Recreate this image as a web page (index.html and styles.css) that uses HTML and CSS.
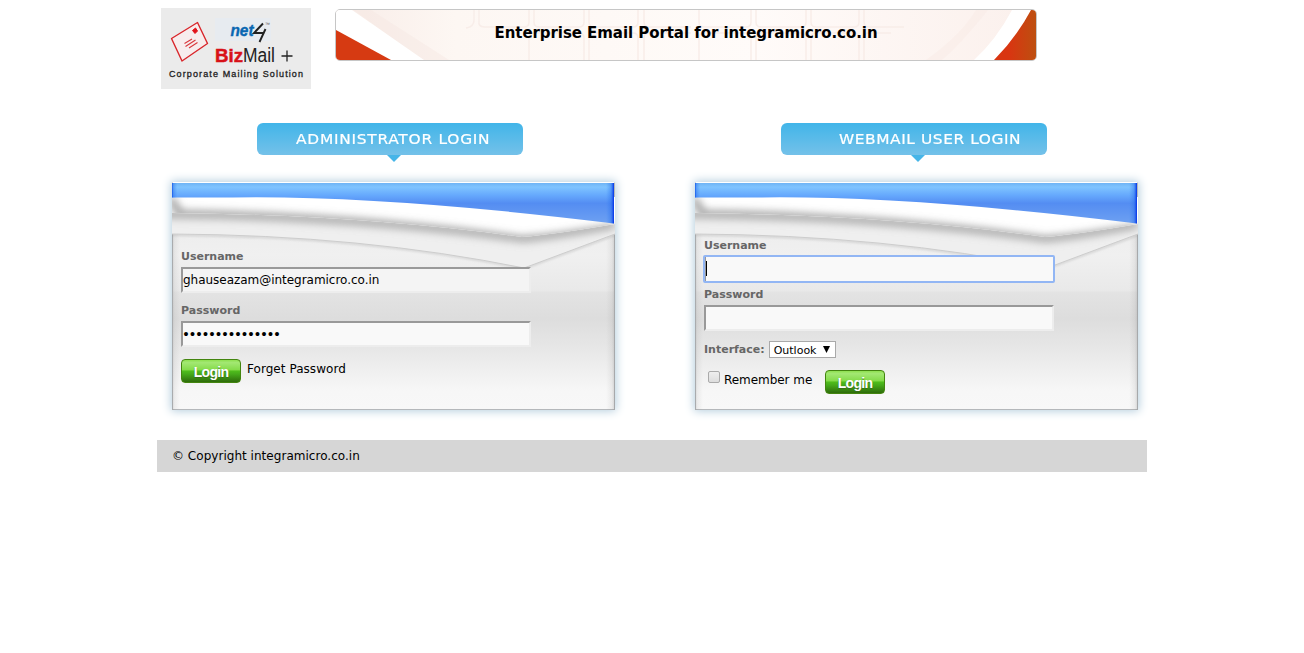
FILE: index.html
```html
<!DOCTYPE html>
<html lang="en">
<head>
<meta charset="utf-8">
<title>Enterprise Email Portal</title>
<link rel="stylesheet" href="styles.css">
</head>
<body>
<svg width="0" height="0" class="defs">
  <defs>
    <linearGradient id="sky" x1="0" y1="0" x2="0" y2="1">
      <stop offset="0" stop-color="#6fb4f5"/><stop offset=".1" stop-color="#7fc4ff"/>
      <stop offset=".3" stop-color="#66a9fd"/><stop offset=".5" stop-color="#548df2"/><stop offset="1" stop-color="#6ea1f2"/>
    </linearGradient>
    <linearGradient id="edge" x1="0" x2="1" y1="0" y2="0">
      <stop offset="0" stop-color="#0549e8" stop-opacity=".9"/><stop offset=".003" stop-color="#1a60ec" stop-opacity=".4"/><stop offset=".012" stop-color="#2a7df0" stop-opacity="0"/>
      <stop offset=".982" stop-color="#2a7df0" stop-opacity="0"/><stop offset=".993" stop-color="#2468ee" stop-opacity=".4"/><stop offset="1" stop-color="#0030e8"/>
    </linearGradient>
    <linearGradient id="side" x1="0" x2="1" y1="0" y2="0">
      <stop offset="0" stop-color="#888" stop-opacity=".3"/><stop offset=".006" stop-color="#888" stop-opacity=".1"/><stop offset=".018" stop-color="#888" stop-opacity="0"/>
      <stop offset=".98" stop-color="#888" stop-opacity="0"/><stop offset=".993" stop-color="#888" stop-opacity=".12"/><stop offset="1" stop-color="#888" stop-opacity=".35"/>
    </linearGradient>
    <filter id="soft" x="-5%" y="-60%" width="110%" height="220%"><feGaussianBlur stdDeviation="4.500"/></filter>
    <filter id="hair" x="-5%" y="-20%" width="110%" height="140%"><feGaussianBlur stdDeviation="1"/></filter>
    <clipPath id="ridge"><path d="M0 31Q190 33 350 55Q385 52 443 42V0H0Z"/></clipPath>
    <clipPath id="below"><path d="M0 31Q190 33 350 55Q385 52 443 42V52L352 86Q190 53 0 52Z"/></clipPath>
    <symbol id="flap" viewBox="0 0 443 228">
      <rect y="52" width="443" height="176" fill="url(#side)"/>
      <path d="M0 53Q190 54 352 86.500L443 53" fill="none" stroke="#999" stroke-opacity=".35" stroke-width="2" filter="url(#hair)"/>
      <path d="M0 15H443V52L352 86Q190 53 0 52Z" fill="#efefef"/>
      <path d="M0 52Q190 53 352 86L443 52" fill="none" stroke="#cdcdcd"/>
      <g clip-path="url(#below)"><path d="M-20 32H0Q190 34 350 56Q385 53 443 42" fill="none" stroke="#8f8f8f" stroke-opacity=".75" stroke-width="8" filter="url(#soft)"/></g>
      <g clip-path="url(#ridge)">
        <path d="M0 15H443V60H0Z" fill="#fff"/>
        <path d="M-2 16L8 32Q190 35 350 58Q385 56 443 46" fill="none" stroke="#808080" stroke-opacity=".85" stroke-width="7" filter="url(#soft)"/>
      </g>
      <path d="M0 1H442V41.500Q210 13 60 15.500H0Z" fill="url(#sky)"/>
      <path d="M0 1H442V41.500Q210 13 60 15.500H0Z" fill="url(#edge)"/>
    </symbol>
  </defs>
</svg>
<div class="page">
  <header class="top">
    <svg class="logo" width="150" height="81" viewBox="0 0 150 81">
      <rect width="150" height="81" fill="#ebebeb"/>
      <rect x="54" y="10" width="56" height="23" fill="#e7ebf0"/>
      <path d="M10.500 30.500L36.500 14.500L46.500 35.500L21 53Z" fill="#f7eded" stroke="#d9262b" stroke-width="1.400" stroke-linejoin="round"/>
      <path d="M31.500 22.500L34.500 20L36.500 23L34 25.500Z" fill="#e2131a" stroke="#e2131a"/>
      <path d="M23.500 35.500L31 31M24.500 38.500L34.500 32M28 40L36.500 34.500" stroke="#d9383c" stroke-width="1.100"/>
      <text x="69.500" y="28" class="net" textLength="23" lengthAdjust="spacingAndGlyphs">net</text>
      <path d="M102 15.500L93 25H103.500M104.500 21L98.500 34" fill="none" stroke="#222" stroke-width="1.900"/>
      <text x="104" y="18" class="tm">™</text>
      <text x="54" y="54" class="biz" textLength="28" lengthAdjust="spacingAndGlyphs">Biz</text>
      <text x="82" y="54" class="mail" textLength="32" lengthAdjust="spacingAndGlyphs">Mail</text>
      <path d="M120.500 48H131.500M126 42.500V53.500" stroke="#222" stroke-width="1.300"/>
      <text x="8" y="69" class="tag" textLength="134">Corporate Mailing Solution</text>
    </svg>
    <div class="banner">
      <svg class="banner-art" width="700" height="50" viewBox="0 0 700 50">
        <defs>
          <linearGradient id="cream" x1="0" x2="1" y1="0" y2="0">
            <stop offset="0" stop-color="#f8ece7"/><stop offset=".17" stop-color="#fdf7f3"/><stop offset=".6" stop-color="#fffbf9"/><stop offset="1" stop-color="#fbf0ec"/>
          </linearGradient>
          <linearGradient id="rust" x1="0" x2="1" y1="0" y2="0"><stop offset=".35" stop-color="#d93511"/><stop offset="1" stop-color="#bd4f10"/></linearGradient>
        </defs>
        <rect width="700" height="50" fill="url(#cream)"/>
        <path d="M35 0L113 50H86L18 0Z" fill="#f4e7e1" opacity=".4"/>
        <path d="M652 0Q624 35 606 50H590Q625 25 640 0Z" fill="#f7e9e3" opacity=".4"/>
        <g fill="none" stroke="#f7ebe6" stroke-width="1.500" opacity=".85">
          <path d="M138 0V10Q138 17 130 18M143 0V14Q144 17 149 17H188Q193 17 193 12V0M198 0V12Q198 17 203 17H243Q248 17 248 12V0M253 0V12Q253 17 258 17H297Q302 17 302 12V0M308 0V12Q308 17 313 17H355M363 0V12Q363 17 368 17H410Q415 17 415 12V0M420 0V12Q420 17 425 17H465Q470 17 470 12V0M475 0V12Q475 17 480 17H518Q523 17 523 12V0M528 0V12Q528 17 533 17H568"/>
          <path d="M193 50V28Q193 23 198 23H243Q248 23 248 28V50M253 50V28Q253 23 258 23H297Q302 23 302 28V50M308 50V28Q308 23 313 23H355M363 50V28Q363 23 368 23H410Q415 23 415 28V50M420 50V28Q420 23 425 23H465Q470 23 470 28V50M475 50V28Q475 23 480 23H518Q523 23 523 28V50M528 50V28Q528 23 533 23H555"/>
        </g>
        <path d="M0 0H16L88 50H0Z" fill="#fff"/>
        <path d="M0 20L55 50H0Z" fill="#d63a12"/>
        <path d="M676 0Q660 30 638 50H662L700 0Z" fill="#fff"/>
        <path d="M695 0H700V50H658Q680 28 695 0Z" fill="url(#rust)"/>
      </svg>
      <h1 class="banner-title"><span class="t-title">Enterprise Email Portal for integramicro.co.in</span></h1>
    </div>
  </header>

  <main class="columns">
    <section class="column">
      <h2 class="ribbon"><span class="t-admin">ADMINISTRATOR LOGIN</span></h2>
      <div class="card">
        <svg class="card-art" width="443" height="228"><use href="#flap"/></svg>
        <form class="form admin">
          <label class="label">Username</label>
          <input class="field shaded" type="text" value="ghauseazam@integramicro.co.in">
          <label class="label second">Password</label>
          <input class="field dots" type="text" value="•••••••••••••••">
          <div class="actions"><button type="button" class="login">Login</button><a class="plain forget">Forget Password</a></div>
        </form>
      </div>
    </section>
    <section class="column">
      <h2 class="ribbon wide"><span class="t-web">WEBMAIL USER LOGIN</span></h2>
      <div class="card">
        <svg class="card-art" width="443" height="228"><use href="#flap"/></svg>
        <form class="form webmail">
          <label class="label">Username</label>
          <div class="field focused"><i class="caret"></i></div>
          <label class="label">Password</label>
          <input class="field" type="text">
          <div class="choice"><label class="label">Interface:</label><div class="select"><span>Outlook</span><svg width="7" height="8"><path d="M0 0H7L3.500 7Z"/></svg></div></div>
          <div class="actions"><i class="check"></i><span class="plain remember">Remember me</span><button type="button" class="login">Login</button></div>
        </form>
      </div>
    </section>
  </main>
  <footer class="footer"><span class="plain copy">© Copyright integramicro.co.in</span></footer>
</div>
</body>
</html>
```

FILE: styles.css
```css
* { box-sizing: border-box; }
body { margin: 0; background: #fff; font-family: "DejaVu Sans", Verdana, sans-serif; color: #000; }
.defs { position: absolute; }
.page { width: 990px; margin: 0 auto; }
.top { display: flex; height: 123px; padding: 8px 0 0 4px; gap: 24px; }
.logo { display: block; }
.net { font: italic bold 17px "Liberation Sans", sans-serif; fill: #0967b2; stroke: #0967b2; stroke-width: .4px; }
.tm { font: 5px "Liberation Sans", sans-serif; fill: #555; }
.biz { font: bold 19px "Liberation Sans", sans-serif; fill: #d81118; stroke: #d81118; stroke-width: .5px; }
.mail { font: 20px "Liberation Sans", sans-serif; fill: #222; }
.tag { font: 9px "Liberation Sans", sans-serif; fill: #222; stroke: #222; stroke-width: .3px; }
.banner { position: relative; width: 702px; height: 52px; margin-top: 1px; border: 1px solid #c6c6c6; border-radius: 5px; overflow: hidden; }
.banner-art { position: absolute; left: 0; top: 0; }
.banner-title { position: relative; margin: 0; padding-top: 13px; text-align: center; font-size: 15px; line-height: 20px; font-weight: bold; }
.t-title { letter-spacing: -.06px; }
.columns { display: flex; gap: 80px; padding-left: 15px; }
.column { width: 443px; }
.ribbon { position: relative; width: 266px; height: 32px; margin: 0 0 27px 85px; padding-left: 39px; border-radius: 6px; background: linear-gradient(#41b5e9, #74c1e9); color: #fff; font-size: 14px; line-height: 32px; font-weight: normal; white-space: nowrap; }
.ribbon.wide { margin-left: 86px; padding-left: 58px; }
.ribbon::after { content: ""; position: absolute; left: 130px; top: 32px; border: 7px solid transparent; border-top-color: #46b5e8; border-bottom: 0; }
.t-admin, .t-web { display: inline-block; transform: scaleX(1.1); transform-origin: left; -webkit-text-stroke: .2px #fff; }
.t-admin { letter-spacing: .68px; }
.t-web { letter-spacing: .52px; }
.card { position: relative; height: 228px; border: 1px solid #b5b8bb; border-top-color: #fff; background: linear-gradient(#e8e8e8 0, #f0f0f0 32%, #e9e9e9 47.500%, #e3e3e3 48.500%, #dddddd 60%, #e6e6e6 72%, #f7f7f7 92%, #f8f8f8 100%); box-shadow: 0 0 9px 1px #b4cddd; }
.card-art { position: absolute; left: -1px; top: -1px; }
.form { position: relative; display: flex; flex-direction: column; padding-left: 8px; }
.admin { padding-top: 66px; }
.webmail { padding-top: 55px; }
.label { height: 18px; padding-top: 1px; line-height: 14px; font-size: 11px; font-weight: bold; color: #666; }
.second { margin-top: 10px; }
.field { display: block; width: 350px; height: 26px; margin: 0; padding: 0; border: 2px solid; border-color: #999 #ededed #ededed #999; background: #f9f9f9; font: 12px "DejaVu Sans", sans-serif; color: #000; outline: 0; }
.shaded { background: #f4f4f4; letter-spacing: -.03px; }
.dots { font-size: 13.5px; letter-spacing: -1.46px; text-indent: -1px; }
.actions { display: flex; align-items: flex-start; }
.admin .actions { margin-top: 12px; }
.login { width: 60px; height: 24px; padding: 1px 0 0; border: 1px solid #43850f; border-radius: 4px; background: linear-gradient(#8ee04f 0, #a3e873 12%, #84db49 45%, #4fbd1c 50%, #45a91a 65%, #2e6c0a 100%); color: #fff; font: bold 14px "Liberation Sans", sans-serif; letter-spacing: -.7px; text-shadow: 0 1px 1px #376b18; }
.plain { font-size: 12px; line-height: 18px; white-space: nowrap; }
.forget { margin: 1px 0 0 6px; letter-spacing: .05px; }
.focused { border-color: #8a94a8 #ededed #ededed #999; border-width: 1px 1px 1px 2px; outline: 2px solid #92b6f4; outline-offset: -1px; border-radius: 1px; margin-bottom: 5px; }
.caret { display: block; width: 1px; height: 15px; margin-top: 4px; background: #000; }
.choice { display: flex; margin-top: 10px; gap: 4px; }
.choice .label { padding-top: 2px; }
.select { display: flex; align-items: center; justify-content: space-between; width: 67px; height: 17px; padding: 1px 5px 0 4px; border: 1px solid #a9a9a9; background: #fff; font-size: 11px; }
.webmail .actions { margin-top: 11px; }
.check { width: 12px; height: 12px; margin: 1px 4px 0; border: 1px solid #aaa; border-radius: 2px; background: linear-gradient(#eee, #ddd); }
.remember { width: 101px; padding-top: 1px; letter-spacing: -.05px; }
.footer { height: 32px; margin-top: 30px; padding: 7px 0 0 15px; background: #d6d6d6; line-height: 18px; display: flex; }
.copy { letter-spacing: .03px; }
```
